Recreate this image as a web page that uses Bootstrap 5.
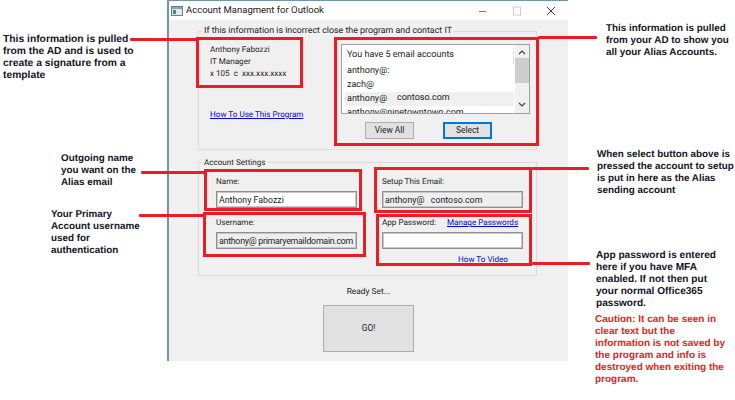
<!DOCTYPE html>
<html lang="en">

<head>
  <meta charset="UTF-8">
  <meta name="viewport" content="width=device-width, initial-scale=1.0">
  <title>Account Managment for Outlook</title>
  <link href="https://cdn.jsdelivr.net/npm/bootstrap@5.3.0/dist/css/bootstrap.min.css" rel="stylesheet">
  <style>
    body { background: #fff; width: 735px; height: 400px; overflow: hidden; position: relative; font-family: "Liberation Sans", Arial, sans-serif; text-rendering: geometricPrecision; }

    /* the app window */
    .app-window { position: absolute; left: 167px; top: 0; width: 401px; background: #f0f0f0; border-left: 2px solid #6f97ab; border-top: 1px solid #6f97ab; font-family: Roboto, "Liberation Sans", sans-serif; font-size: 8.1px; line-height: 12px; color: #222; padding-bottom: 9px; }
    .title-bar { height: 19px; background: #fff; font-size: 9.5px; color: #222; padding-left: 2px; }
    .title-bar svg { flex: none; }
    .title-text { margin-left: 3px; }
    .win-ctrls { margin-left: auto; gap: 24px; padding-right: 12px; }
    .group-box { margin: 5px 31px 0 29px; border: 1px solid #dcdcdc; padding: 5px 6px 10px 11px; min-width: 0; }
    .group-box legend { float: none; width: auto; font-size: 8.1px; line-height: 13px; margin: 0 0 0 -8px; padding: 0 2px; }
    .group-box .legend-wide { font-size: 8.85px; }
    .settings-box { margin-top: 6px; padding-top: 6px; padding-bottom: 11px; }
    .info-col { width: 131px; flex: none; }
    .help-link { color: #00e; text-decoration: underline; white-space: nowrap; }
    .info-col .help-link { display: block; margin-top: 29px; }

    .list-box { width: 189px; height: 70px; margin-top: 1px; background: #fff; border: 1px solid #a0a0a0; overflow: hidden; }
    .list-rows { width: 172px; padding: 2px 0 0 3px; flex: none; }
    .list-rows .list-group-item { background: transparent; border: 0; padding: 0 0 0 2px; font-size: 9px; line-height: 14px; color: #222; white-space: nowrap; height: 14px; position: relative; }
    .list-rows .list-head { height: 18px; line-height: 17px; border-right: 1px solid #e2e2e2; }
    .list-rows .row-picked { background: #f0f0f0; }
    .domain-tag { position: absolute; left: 52px; top: -1px; }
    .scroll-track { width: 14px; flex: none; margin-left: 1px; position: relative; background: #f0f0f0; }
    .scroll-thumb { position: absolute; left: 0; right: 0; top: 13px; height: 25px; background: #cdcdcd; }
    .scroll-track svg { position: absolute; left: 3px; }
    .arrow-up { top: 5px; }
    .arrow-down { top: 57px; }

    .list-btns { margin-top: 8px; padding-left: 24px; gap: 29px; }
    .win-btn { width: 49px; height: 17px; padding: 0; font-size: 8.4px; line-height: 13px; color: #222; background: #e1e1e1; border: 1px solid #adadad; border-radius: 0; }
    .win-btn.btn-focus { border: 2px solid #0078d7; }

    .field-grid { display: grid; grid-template-columns: 141px 141px; column-gap: 25px; padding-left: 6px; }
    .field-label { display: block; margin-bottom: 4px; white-space: nowrap; }
    .win-input { height: 17px; min-height: 0; padding: 0 2px; font-size: 8.8px; line-height: 13px; color: #222; background: #fff; border: 1px solid #8f8f8f; border-radius: 0; box-shadow: inset 0 0 0 1px #c8c8c8; margin-bottom: 8px; }
    .win-input[readonly] { background: #eee; }
    .win-input.val-tight { letter-spacing: -0.25px; }
    .pw-label { width: 65px; margin-bottom: 0; }
    .video-link { display: block; padding-left: 76px; margin-top: -4px; margin-bottom: -1px; height: 12px; }

    .go-btn { width: 91px; height: 47px; margin-top: 7px; padding: 0; font-size: 8.4px; color: #222; background: #e1e1e1; border: 1px solid #adadad; border-radius: 0; }
    .ready-text { margin-top: 10px; font-size: 8.4px; }

    /* callouts drawn on top of the screenshot */
    .red-box { position: absolute; border: 3px solid #ed1c24; }
    .red-line { position: absolute; height: 3px; background: #ed1c24; border-radius: 1px; }
    .note { position: absolute; font-weight: 700; font-size: 9.85px; line-height: 12px; color: #14141e; margin: 0; white-space: nowrap; }
    .note-red { color: #ed1c24; }

    #box-info { left: 196px; top: 37px; width: 107px; height: 51px; }
    #box-list { left: 334px; top: 37px; width: 205px; height: 109px; }
    #box-name { left: 204px; top: 169px; width: 158px; height: 42px; }
    #box-user { left: 203px; top: 212px; width: 163px; height: 45px; }
    #box-setup { left: 374px; top: 167px; width: 158px; height: 46px; }
    #box-pass { left: 376px; top: 214px; width: 156px; height: 52px; }

    #line-info { left: 130px; top: 38px; width: 67px; }
    #line-name { left: 141px; top: 171px; width: 64px; }
    #line-user { left: 139px; top: 214px; width: 65px; }
    #line-list { left: 538px; top: 36px; width: 59px; }
    #line-setup { left: 532px; top: 167px; width: 57px; }
    #line-pass { left: 532px; top: 262px; width: 58px; }

    #note-info { left: 3px; top: 34px; font-size: 10.3px; }
    #note-name { left: 61px; top: 153px; }
    #note-user { left: 51px; top: 209px; }
    #note-list { left: 606px; top: 23px; }
    #note-setup { left: 597px; top: 149px; }
    #note-pass { left: 596px; top: 250px; font-size: 10.1px; }
    #note-caution { left: 595px; top: 314px; font-size: 10px; }
  </style>
</head>

<body>
  <div class="app-window">
    <div class="title-bar d-flex align-items-center">
      <svg width="12" height="10" viewBox="0 0 12 10">
        <rect x="0.5" y="0.5" width="11" height="9" fill="#dfe7ea" stroke="#6d7d86" />
        <rect x="1" y="1" width="10" height="2" fill="#7fa6bd" />
        <rect x="2" y="4" width="3" height="4" fill="#3f8f6f" />
      </svg>
      <span class="title-text">Account Managment for Outlook</span>
      <div class="win-ctrls d-flex align-items-center">
        <svg width="10" height="10" viewBox="0 0 10 10"><path d="M1 5.5h7" stroke="#777" stroke-width="1" /></svg>
        <svg width="10" height="10" viewBox="0 0 10 10"><rect x="1.5" y="1" width="7" height="8" fill="none" stroke="#ccc" /></svg>
        <svg width="10" height="10" viewBox="0 0 10 10"><path d="M1 1l8 8M9 1l-8 8" stroke="#444" stroke-width="1" /></svg>
      </div>
    </div>

    <fieldset class="group-box">
      <legend class="legend-wide">If this information is incorrect close the program and contact IT</legend>
      <div class="d-flex">
        <div class="info-col">
          <div>Anthony Fabozzi</div>
          <div>IT Manager</div>
          <div>x 105&nbsp; c&nbsp; xxx.xxx.xxxx</div>
          <a class="help-link" href="#">How To Use This Program</a>
        </div>
        <div>
          <div class="list-box d-flex">
            <div class="list-rows list-group list-group-flush">
              <div class="list-group-item list-head">You have 5 email accounts</div>
              <div class="list-group-item">anthony@:</div>
              <div class="list-group-item">zach@</div>
              <div class="list-group-item row-picked">anthony@<span class="domain-tag">contoso.com</span></div>
              <div class="list-group-item">anthony@ninetowntown.com</div>
            </div>
            <div class="scroll-track">
              <svg class="arrow-up" width="8" height="5" viewBox="0 0 8 5"><path d="M1 4l3-3 3 3" fill="none" stroke="#444" stroke-width="1.2" /></svg>
              <div class="scroll-thumb"></div>
              <svg class="arrow-down" width="8" height="5" viewBox="0 0 8 5"><path d="M1 1l3 3 3-3" fill="none" stroke="#444" stroke-width="1.2" /></svg>
            </div>
          </div>
          <div class="list-btns d-flex">
            <button type="button" class="btn win-btn">View All</button>
            <button type="button" class="btn win-btn btn-focus">Select</button>
          </div>
        </div>
      </div>
    </fieldset>

    <fieldset class="group-box settings-box">
      <legend>Account Settings</legend>
      <div class="field-grid">
        <div>
          <label class="field-label">Name:</label>
          <input type="text" class="form-control win-input" value="Anthony Fabozzi">
          <label class="field-label">Username:</label>
          <input type="text" class="form-control win-input val-tight" readonly value="anthony@ primaryemaildomain.com">
        </div>
        <div>
          <label class="field-label">Setup This Email:</label>
          <input type="text" class="form-control win-input" readonly value="anthony@   contoso.com">
          <div class="d-flex field-label">
            <span class="pw-label">App Password:</span>
            <a class="help-link" href="#">Manage Passwords</a>
          </div>
          <input type="text" class="form-control win-input">
          <a class="help-link video-link" href="#">How To Video</a>
        </div>
      </div>
    </fieldset>

    <div class="d-flex flex-column align-items-center">
      <div class="ready-text">Ready Set...</div>
      <button type="button" class="btn go-btn">GO!</button>
    </div>
  </div>

  <div class="red-box" id="box-info"></div>
  <div class="red-box" id="box-list"></div>
  <div class="red-box" id="box-name"></div>
  <div class="red-box" id="box-user"></div>
  <div class="red-box" id="box-setup"></div>
  <div class="red-box" id="box-pass"></div>

  <div class="red-line" id="line-info"></div>
  <div class="red-line" id="line-name"></div>
  <div class="red-line" id="line-user"></div>
  <div class="red-line" id="line-list"></div>
  <div class="red-line" id="line-setup"></div>
  <div class="red-line" id="line-pass"></div>

  <p class="note" id="note-info">This information is pulled<br>from the AD and is used to<br>create a signature from a<br>template</p>
  <p class="note" id="note-name">Outgoing name<br>you want on the<br>Alias email</p>
  <p class="note" id="note-user">Your Primary<br>Account username<br>used for<br>authentication</p>
  <p class="note" id="note-list">This information is pulled<br>from your AD to show you<br>all your Alias Accounts.</p>
  <p class="note" id="note-setup">When select button above is<br>pressed the account to setup<br>is put in here as the Alias<br>sending account</p>
  <p class="note" id="note-pass">App password is entered<br>here if you have MFA<br>enabled. If not then put<br>your normal Office365<br>password.</p>
  <p class="note note-red" id="note-caution">Caution: It can be seen in<br>clear text but the<br>information is not saved by<br>the program and info is<br>destroyed when exiting the<br>program.</p>

  <script src="https://cdn.jsdelivr.net/npm/bootstrap@5.3.0/dist/js/bootstrap.bundle.min.js"></script>
</body>

</html>
